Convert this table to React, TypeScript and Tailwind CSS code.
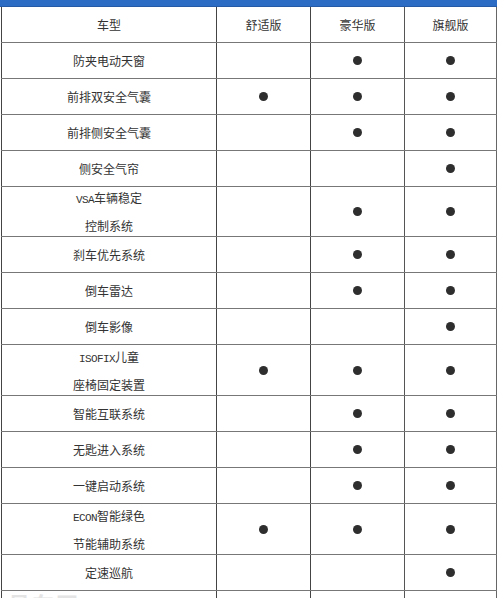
import React from "react";

type Row = { label: React.ReactNode; h: string; a: boolean; b: boolean; c: boolean };

const L = ({ children }: { children: React.ReactNode }) => (
  <span className="text-[11px] tracking-[-0.6px]" style={{ fontFamily: '"Liberation Mono", monospace' }}>
    {children}
  </span>
);

const rows: Row[] = [
  { label: "防夹电动天窗", h: "h-[36px]", a: false, b: true, c: true },
  { label: "前排双安全气囊", h: "h-[36px]", a: true, b: true, c: true },
  { label: "前排侧安全气囊", h: "h-[36px]", a: false, b: true, c: true },
  { label: "侧安全气帘", h: "h-[36px]", a: false, b: false, c: true },
  {
    label: (
      <>
        <div><L>VSA</L>车辆稳定</div>
        <div>控制系统</div>
      </>
    ),
    h: "h-[50px]",
    a: false,
    b: true,
    c: true,
  },
  { label: "刹车优先系统", h: "h-[36px]", a: false, b: true, c: true },
  { label: "倒车雷达", h: "h-[36px]", a: false, b: true, c: true },
  { label: "倒车影像", h: "h-[36px]", a: false, b: false, c: true },
  {
    label: (
      <>
        <div><L>ISOFIX</L>儿童</div>
        <div>座椅固定装置</div>
      </>
    ),
    h: "h-[51px]",
    a: true,
    b: true,
    c: true,
  },
  { label: "智能互联系统", h: "h-[36px]", a: false, b: true, c: true },
  { label: "无匙进入系统", h: "h-[36px]", a: false, b: true, c: true },
  { label: "一键启动系统", h: "h-[36px]", a: false, b: true, c: true },
  {
    label: (
      <>
        <div><L>ECON</L>智能绿色</div>
        <div>节能辅助系统</div>
      </>
    ),
    h: "h-[51px]",
    a: true,
    b: true,
    c: true,
  },
  { label: "定速巡航", h: "h-[36px]", a: false, b: false, c: true },
];

const Dot = ({ on }: { on: boolean }) =>
  on ? <span className="block w-[9px] h-[9px] rounded-full bg-[#2e2e2e]" /> : null;

export default function App() {
  return (
    <div
      className="w-[500px] h-[598px] overflow-hidden bg-white text-[12px] text-[#333]"
      style={{ fontFamily: '"Noto Sans CJK SC", "Noto Sans", sans-serif' }}
    >
      <div className="w-[497px] h-[7px] bg-[#2d6cc5] border-b border-[#245aa6]" />
      <div className="ml-[1px] w-[496px]">
        <div className="flex h-[36px] border-b border-[#777]">
          <div className="w-[216px] border-l border-r border-[#444] flex items-center justify-center">车型</div>
          <div className="w-[94px] border-r border-[#444] flex items-center justify-center">舒适版</div>
          <div className="w-[94px] border-r border-[#555] flex items-center justify-center">豪华版</div>
          <div className="w-[92px] border-r border-[#666] flex items-center justify-center">旗舰版</div>
        </div>
        {rows.map((r, i) => (
          <div key={i} className={`flex ${r.h} border-b border-[#777]`}>
            <div className="w-[216px] border-l border-r border-[#444] flex flex-col items-center justify-center leading-[25px]">
              {r.label}
            </div>
            <div className="w-[94px] border-r border-[#444] flex items-center justify-center">
              <Dot on={r.a} />
            </div>
            <div className="w-[94px] border-r border-[#555] flex items-center justify-center">
              <Dot on={r.b} />
            </div>
            <div className="w-[92px] border-r border-[#666] flex items-center justify-center">
              <Dot on={r.c} />
            </div>
          </div>
        ))}
        <div className="flex h-[20px]">
          <div className="w-[216px] border-l border-r border-[#444] relative overflow-hidden">
            <span className="absolute left-[6px] top-[1px] text-[22px] leading-none text-[#e4e4e4] font-bold tracking-[2px]">
              易车网
            </span>
          </div>
          <div className="w-[94px] border-r border-[#444]" />
          <div className="w-[94px] border-r border-[#555]" />
          <div className="w-[92px] border-r border-[#666]" />
        </div>
      </div>
    </div>
  );
}
